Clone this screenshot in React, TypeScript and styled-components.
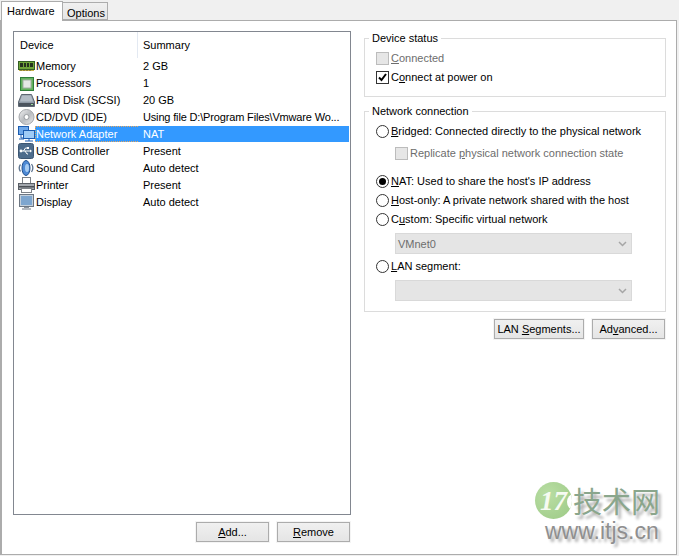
import React from 'react'
import styled, { createGlobalStyle } from 'styled-components'

const Global = createGlobalStyle`
  html, body {
    margin: 0;
    padding: 0;
    background: #f0f0f0;
  }
  * {
    box-sizing: border-box;
  }
`

const Dialog = styled.div`
  position: relative;
  width: 679px;
  height: 556px;
  padding: 1px 2px 1px 0;
  overflow: hidden;
  background: #f0f0f0;
  color: #000;
  font-family: 'Liberation Sans', Arial, sans-serif;
  font-size: 11px;
  line-height: 14px;
`

const TabStrip = styled.div`
  display: flex;
  height: 19px;
  padding-left: 1px;
`

const Tab = styled.div<{ $active?: boolean }>`
  position: relative;
  z-index: ${p => (p.$active ? 1 : 0)};
  height: ${p => (p.$active ? '20px' : '18px')};
  margin-top: ${p => (p.$active ? '0' : '1px')};
  margin-left: ${p => (p.$active ? '0' : '-1px')};
  padding: ${p => (p.$active ? '2px 5px 0' : '3px 4px 0')};
  width: ${p => (p.$active ? '62px' : '46px')};
  border: 1px solid #acacac;
  border-bottom: ${p => (p.$active ? 'none' : '1px solid #acacac')};
  background: ${p => (p.$active ? '#fff' : 'linear-gradient(#f0f0f0, #e5e5e5)')};
  white-space: nowrap;
`

const Panel = styled.div`
  display: flex;
  gap: 13px;
  height: 535px;
  padding: 10px 10px 12px 11px;
  border: 1px solid #acacac;
  border-left-width: 2px;
  background: #fff;
`

const LeftColumn = styled.div`
  display: flex;
  flex-direction: column;
  width: 338px;
`

const RightColumn = styled.div`
  display: flex;
  flex-direction: column;
  width: 302px;
`

const DeviceList = styled.div`
  flex: 1;
  min-height: 0;
  padding-right: 1px;
  border: 1px solid #828790;
  background: #fff;
`

const HeaderRow = styled.div`
  display: grid;
  grid-template-columns: 124px 1fr;
  height: 26px;
`

const HeaderCell = styled.div<{ $last?: boolean }>`
  padding: 6px 0 0 ${p => (p.$last ? '5px' : '6px')};
  border-right: ${p => (p.$last ? 'none' : '1px solid #e3e9f2')};
`

const DeviceRow = styled.div`
  display: grid;
  grid-template-columns: 124px 1fr;
  height: 17px;
`

const NameCell = styled.div`
  display: flex;
  align-items: flex-start;
  padding-left: 4px;
  white-space: nowrap;
`

const Label = styled.span<{ $selected?: boolean }>`
  display: flex;
  flex: 1;
  align-items: center;
  height: 16px;
  background: ${p => (p.$selected ? '#3399ff' : 'transparent')};
  color: ${p => (p.$selected ? '#fff' : 'inherit')};
  border: 1px ${p => (p.$selected ? 'dotted #e8a860' : 'solid transparent')};
  border-right: none;
`

const Summary = styled.div<{ $selected?: boolean; $tight?: boolean }>`
  height: 16px;
  padding: 1px 0 0 5px;
  overflow: hidden;
  background: ${p => (p.$selected ? '#3399ff' : 'transparent')};
  color: ${p => (p.$selected ? '#fff' : 'inherit')};
  letter-spacing: ${p => (p.$tight ? '-0.16px' : 'normal')};
  white-space: nowrap;
`

const ButtonRow = styled.div<{ $top: number }>`
  display: flex;
  justify-content: flex-end;
  gap: 8px;
  margin-top: ${p => p.$top}px;
  padding-right: 1px;
`

const Button = styled.button<{ $width: number }>`
  width: ${p => p.$width}px;
  height: 20px;
  padding: 0;
  border: 1px solid #acacac;
  border-radius: 0;
  outline: 1px solid #f4f4f4;
  background: linear-gradient(#f0f0f0, #e5e5e5);
  color: #000;
  font: inherit;
`

const Group = styled.fieldset<{ $height: number; $top?: number }>`
  height: ${p => p.$height}px;
  min-width: 0;
  margin: ${p => p.$top ?? 0}px 0 0;
  padding: 6px 0 0 11px;
  border: 1px solid #dcdcdc;
`

const GroupTitle = styled.legend`
  margin-left: -7px;
  padding: 0 3px;
  line-height: 14px;
`

const Option = styled.div<{ $top?: number; $indent?: number; $disabled?: boolean }>`
  display: flex;
  align-items: center;
  gap: 2px;
  height: 14px;
  margin-top: ${p => p.$top ?? 0}px;
  margin-left: ${p => p.$indent ?? 0}px;
  color: ${p => (p.$disabled ? '#6d6d6d' : '#000')};
  white-space: nowrap;
`

const CheckBox = styled.span<{ $disabled?: boolean }>`
  display: flex;
  flex: none;
  align-items: center;
  justify-content: center;
  width: 13px;
  height: 13px;
  border: 1px solid ${p => (p.$disabled ? '#bcbcbc' : '#333')};
  background: ${p => (p.$disabled ? '#e6e6e6' : '#fff')};
`

const Radio = styled.span`
  display: flex;
  flex: none;
  align-items: center;
  justify-content: center;
  width: 13px;
  height: 13px;
  border: 1px solid #333;
  border-radius: 50%;
  background: #fff;
`

const RadioDot = styled.span`
  width: 7px;
  height: 7px;
  border-radius: 50%;
  background: #000;
`

const Combo = styled.div<{ $top: number }>`
  display: flex;
  align-items: center;
  justify-content: space-between;
  width: 237px;
  height: 21px;
  margin: ${p => p.$top}px 0 0 19px;
  padding: 0 4px 0 2px;
  border: 1px solid #d9d9d9;
  background: #e5e5e5;
  color: #6d6d6d;
`

const Watermark = styled.div`
  position: absolute;
  top: 481px;
  left: 534px;
  width: 130px;
  height: 62px;
  pointer-events: none;
`

const WatermarkTitle = styled.div`
  position: absolute;
  top: 1px;
  left: 39px;
  color: #8aa68c;
  font-family: 'Noto Sans CJK SC', sans-serif;
  font-size: 29px;
  line-height: 36px;
  text-shadow: 3px 4px 3px rgba(0, 0, 0, 0.32);
  white-space: nowrap;
`

const WatermarkUrl = styled.div`
  position: absolute;
  top: 38px;
  left: 11px;
  color: #8f8f8f;
  font-family: 'Liberation Sans', sans-serif;
  font-size: 23px;
  line-height: 24px;
  text-shadow: 3px 3px 3px rgba(0, 0, 0, 0.32);
  white-space: nowrap;
`

const LogoBadge = styled.div`
  position: absolute;
  top: 1px;
  left: 1px;
  display: flex;
  align-items: center;
  justify-content: center;
  width: 37px;
  height: 37px;
  overflow: hidden;
  border-radius: 50%;
  background: radial-gradient(circle at 35% 35%, #b9dea4, #9cc985);
  color: #f6fbf2;
  font-family: 'Liberation Serif', serif;
  font-size: 27px;
  font-style: italic;
  font-weight: 700;
  line-height: 30px;

  &::after {
    content: '';
    position: absolute;
    top: 12px;
    left: 32px;
    width: 14px;
    height: 16px;
    border-radius: 50%;
    background: #fff;
  }
`

const Key = styled.span`
  text-decoration: underline;
  text-underline-offset: 1px;
`

const MemoryIcon = () => (
  <svg width="17" height="16" viewBox="0 0 17 16">
    <rect x="0.5" y="3.5" width="16" height="8" fill="#6fa53a" stroke="#355f26" />
    <path d="M2 5h3v4H2zM6 5h2v4H6zM9 5h2v4H9zM12 5h3v4h-3z" fill="#25331f" />
    <path d="M1 12h15v1H1z" fill="#c8b24a" />
    <path d="M3 12v1M6 12v1M9 12v1M12 12v1" stroke="#5f5a2a" />
  </svg>
)

const ProcessorIcon = () => (
  <svg width="17" height="16" viewBox="0 0 17 16">
    <rect x="2.5" y="2.5" width="13" height="13" fill="#62b25c" stroke="#2f7d3a" />
    <rect x="5" y="5" width="8" height="8" fill="#e6e8e6" stroke="#a5b0a5" />
  </svg>
)

const DiskIcon = () => (
  <svg width="17" height="16" viewBox="0 0 17 16">
    <path d="M3.5 2.500h10L16.500 10v4.500H.5V10z" fill="#8f9aa6" stroke="#5d6772" />
    <path d="M4 3.500h9l2 6H2z" fill="#b4bdc7" />
    <rect x="1" y="11" width="15" height="3" fill="#4b545e" />
    <rect x="13" y="12" width="2" height="1" fill="#9ad89a" />
  </svg>
)

const CdIcon = () => (
  <svg width="17" height="16" viewBox="0 0 17 16">
    <defs>
      <linearGradient id="cd" x1="0" y1="0" x2="1" y2="1">
        <stop offset="0" stopColor="#f3f3f3" />
        <stop offset="0.5" stopColor="#b9bcc0" />
        <stop offset="1" stopColor="#e9e9e9" />
      </linearGradient>
    </defs>
    <circle cx="8.500" cy="8" r="7.500" fill="url(#cd)" stroke="#a4a7ab" />
    <circle cx="8.500" cy="8" r="2.500" fill="#fff" stroke="#9a9da1" />
  </svg>
)

const NetworkIcon = () => (
  <svg width="17" height="16" viewBox="0 0 17 16">
    <rect x="0.500" y="0.500" width="10" height="8" fill="#6ea8ea" stroke="#1c5cb0" />
    <rect x="5.500" y="4.500" width="11" height="8" fill="#9fcbf6" stroke="#1c5cb0" />
    <path d="M3 9v3h2M1 13h5M11 13v2M7 15h8" stroke="#1c5cb0" fill="none" />
  </svg>
)

const UsbIcon = () => (
  <svg width="17" height="16" viewBox="0 0 17 16">
    <rect x="0.500" y="0.500" width="15" height="15" rx="2" fill="#4d6c8c" stroke="#3c5672" />
    <path d="M3 8h9M5.500 8l2-3h2M7 8l2 3h1" stroke="#fff" fill="none" />
    <circle cx="3" cy="8" r="1.400" fill="#fff" />
    <path d="M12 6.500 14 8l-2 1.500z" fill="#fff" />
    <rect x="9" y="4" width="2" height="2" fill="#fff" />
  </svg>
)

const SoundIcon = () => (
  <svg width="17" height="16" viewBox="0 0 17 16">
    <ellipse cx="8" cy="8" rx="4" ry="7.500" fill="#4f8bd6" stroke="#1f4f8f" />
    <ellipse cx="9" cy="8" rx="2" ry="4" fill="#a9cdf2" />
    <path d="M2.500 4.500c-1.500 2-1.500 5 0 7" stroke="#5f7590" fill="none" strokeWidth="1.300" />
    <path d="M13.500 4c1.700 2.500 1.700 5.500 0 8" stroke="#5f7590" fill="none" strokeWidth="1.300" />
  </svg>
)

const PrinterIcon = () => (
  <svg width="17" height="16" viewBox="0 0 17 16">
    <rect x="4.500" y="0.500" width="8" height="6" fill="#fff" stroke="#7d8288" />
    <rect x="0.500" y="6.500" width="16" height="6" fill="#a3a8ae" stroke="#5a5f66" />
    <rect x="1" y="9" width="15" height="1.500" fill="#4a4f55" />
    <rect x="3.500" y="11.500" width="10" height="4" fill="#fff" stroke="#7d8288" />
  </svg>
)

const DisplayIcon = () => (
  <svg width="17" height="16" viewBox="0 0 17 16">
    <rect x="1.500" y="0.500" width="14" height="12" fill="#c4d0dc" stroke="#6d7783" />
    <rect x="3" y="2" width="11" height="9" fill="#7ea6cf" />
    <path d="M6 13h5v1H6z" fill="#8a939d" />
    <path d="M4 15h9" stroke="#6d7783" />
  </svg>
)

const ChevronIcon = () => (
  <svg width="9" height="6" viewBox="0 0 9 6">
    <path d="M1 1l3.500 3.500L8 1" fill="none" stroke="#a6a6a6" strokeWidth="1.500" />
  </svg>
)

const CheckIcon = () => (
  <svg width="11" height="11" viewBox="0 0 11 11">
    <path d="M2 5.500l2.500 2.500L9 2" fill="none" stroke="#000" strokeWidth="2" />
  </svg>
)

const devices = [
  { name: 'Memory', summary: '2 GB', icon: <MemoryIcon /> },
  { name: 'Processors', summary: '1', icon: <ProcessorIcon /> },
  { name: 'Hard Disk (SCSI)', summary: '20 GB', icon: <DiskIcon /> },
  {
    name: 'CD/DVD (IDE)',
    summary: 'Using file D:\\Program Files\\Vmware Wo...',
    icon: <CdIcon />,
    tight: true,
  },
  { name: 'Network Adapter', summary: 'NAT', icon: <NetworkIcon />, selected: true },
  { name: 'USB Controller', summary: 'Present', icon: <UsbIcon /> },
  { name: 'Sound Card', summary: 'Auto detect', icon: <SoundIcon /> },
  { name: 'Printer', summary: 'Present', icon: <PrinterIcon /> },
  { name: 'Display', summary: 'Auto detect', icon: <DisplayIcon /> },
]

export default function App() {
  return (
    <Dialog>
      <Global />
      <TabStrip>
        <Tab $active>Hardware</Tab>
        <Tab>Options</Tab>
      </TabStrip>
      <Panel>
        <LeftColumn>
          <DeviceList>
            <HeaderRow>
              <HeaderCell>Device</HeaderCell>
              <HeaderCell $last>Summary</HeaderCell>
            </HeaderRow>
            {devices.map(d => (
              <DeviceRow key={d.name}>
                <NameCell>
                  {d.icon}
                  <Label $selected={d.selected}>{d.name}</Label>
                </NameCell>
                <Summary $selected={d.selected} $tight={d.tight}>
                  {d.summary}
                </Summary>
              </DeviceRow>
            ))}
          </DeviceList>
          <ButtonRow $top={7}>
            <Button $width={73}>
              <Key>A</Key>dd...
            </Button>
            <Button $width={73}>
              <Key>R</Key>emove
            </Button>
          </ButtonRow>
        </LeftColumn>
        <RightColumn>
          <Group $height={66}>
            <GroupTitle>Device status</GroupTitle>
            <Option $disabled>
              <CheckBox $disabled />
              <span>
                <Key>C</Key>onnected
              </span>
            </Option>
            <Option $top={5}>
              <CheckBox>
                <CheckIcon />
              </CheckBox>
              <span>
                C<Key>o</Key>nnect at power on
              </span>
            </Option>
          </Group>
          <Group $height={208} $top={7}>
            <GroupTitle>Network connection</GroupTitle>
            <Option>
              <Radio />
              <span>
                <Key>B</Key>ridged: Connected directly to the physical network
              </span>
            </Option>
            <Option $top={8} $indent={19} $disabled>
              <CheckBox $disabled />
              <span>
                Replicate <Key>p</Key>hysical network connection state
              </span>
            </Option>
            <Option $top={14}>
              <Radio>
                <RadioDot />
              </Radio>
              <span>
                <Key>N</Key>AT: Used to share the host's IP address
              </span>
            </Option>
            <Option $top={5}>
              <Radio />
              <span>
                <Key>H</Key>ost-only: A private network shared with the host
              </span>
            </Option>
            <Option $top={5}>
              <Radio />
              <span>
                C<Key>u</Key>stom: Specific virtual network
              </span>
            </Option>
            <Combo $top={7}>
              VMnet0
              <ChevronIcon />
            </Combo>
            <Option $top={5}>
              <Radio />
              <span>
                <Key>L</Key>AN segment:
              </span>
            </Option>
            <Combo $top={7}>
              <span />
              <ChevronIcon />
            </Combo>
          </Group>
          <ButtonRow $top={7}>
            <Button $width={90}>
              LAN <Key>S</Key>egments...
            </Button>
            <Button $width={73}>
              Ad<Key>v</Key>anced...
            </Button>
          </ButtonRow>
        </RightColumn>
      </Panel>
      <Watermark>
        <LogoBadge>17</LogoBadge>
        <WatermarkTitle>技术网</WatermarkTitle>
        <WatermarkUrl>www.itjs.cn</WatermarkUrl>
      </Watermark>
    </Dialog>
  )
}
